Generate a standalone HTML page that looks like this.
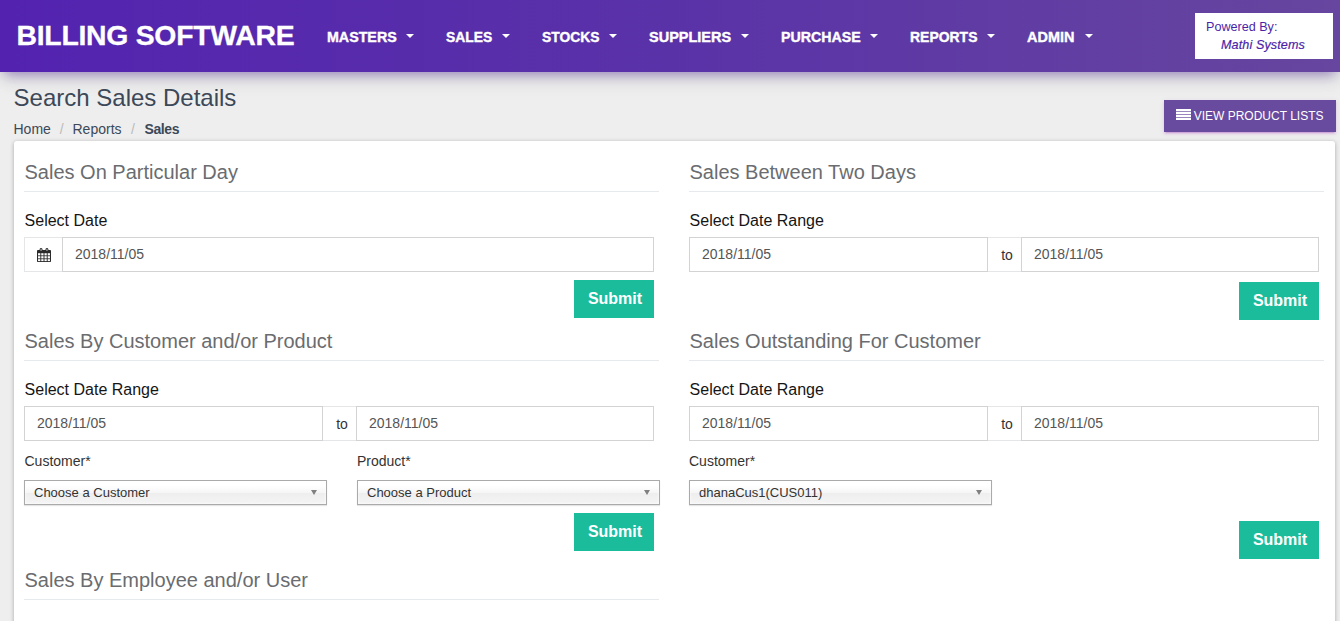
<!DOCTYPE html>
<html lang="en">
<head>
<meta charset="utf-8">
<title>Search Sales Details</title>
<style>
*{box-sizing:border-box;margin:0;padding:0}
html,body{width:1340px;height:621px;overflow:hidden}
body{background:#eeeeee;font-family:"Liberation Sans",Arial,sans-serif;color:#333;position:relative}
.abs{position:absolute;white-space:nowrap}
#nav{position:absolute;left:0;top:0;width:1340px;height:72px;background:linear-gradient(90deg,#5323b0 0%,#5a32a8 50%,#66469f 100%);box-shadow:0 4px 20px 0 rgba(0,0,0,.14),0 7px 12px -5px rgba(94,53,177,.5)}
#brand{left:16.5px;top:19px;font-size:28.4px;line-height:32px;font-weight:bold;color:#fff;-webkit-text-stroke:0.3px #fff;letter-spacing:-.28px}
.mi{top:27px;font-size:15px;line-height:20px;font-weight:bold;color:#fff;transform-origin:0 50%;-webkit-text-stroke:0.4px #fff}
.caret{position:absolute;top:34px;width:0;height:0;border-left:4px solid transparent;border-right:4px solid transparent;border-top:4px solid #fff}
#pow{left:1195px;top:13px;width:138px;height:46px;background:#fff}
#pow .a{left:11px;top:7px;font-size:12.6px;line-height:15px;color:#4b1fa8}
#pow .b{left:26px;top:25px;font-size:12.6px;line-height:15px;color:#4b1fa8;font-style:italic;-webkit-text-stroke:0.2px #4b1fa8;letter-spacing:.1px}
#title{left:13.6px;top:84px;font-size:24px;line-height:28px;color:#3c4858}
.bc{top:121px;font-size:14px;line-height:16px;color:#3c4858}
.bc.sep{color:#bbb}
#vbtn{left:1164px;top:100px;width:172px;height:32px;background:#684a9e;color:#fff;font-size:12px;line-height:32px;box-shadow:0 2px 2px 0 rgba(156,39,176,.14),0 3px 1px -2px rgba(156,39,176,.2),0 1px 5px 0 rgba(156,39,176,.12)}
#panel{left:14px;top:141px;width:1321px;height:500px;background:#fff;border-radius:3px;box-shadow:0 1px 4px rgba(0,0,0,.3)}
.h{font-size:20px;line-height:24px;color:#6a6c6f}
.hr{position:absolute;height:1px;background:#e7eaec;width:635px}
.lb{font-size:16px;line-height:20px;color:#151515}
.lb2{font-size:14px;line-height:18px;color:#333}
.in{position:absolute;height:35px;border:1px solid #d3d3d3;background:#fff;font-size:14px;line-height:33px;color:#555;padding-left:12px}
.ad{position:absolute;height:35px;border:1px solid #e5e6e7;background:#fff;font-size:14px;line-height:35px;color:#333;text-align:center}
.sb{position:absolute;width:80px;height:38px;background:#1abc9c;color:#fff;font-weight:bold;font-size:16px;line-height:38px;text-align:center;padding-left:2px}
.sel{position:absolute;height:25px;width:303px;border:1px solid #aaa;border-radius:0;background:linear-gradient(#fff 20%,#f6f6f6 50%,#eee 52%,#f4f4f4 100%);box-shadow:0 0 3px #fff inset,0 1px 1px rgba(0,0,0,.1);font-size:13px;line-height:23px;color:#333;padding-left:9px}
.sel i{position:absolute;right:8.6px;top:9px;width:0;height:0;border-left:3.8px solid transparent;border-right:3.8px solid transparent;border-top:5.6px solid #808080}
</style>
</head>
<body>
<div id="nav">
  <div id="brand" class="abs">BILLING SOFTWARE</div>
  <div class="abs mi" id="m1" style="left:327px;transform:scaleX(0.950)">MASTERS</div><span class="caret" style="left:406px"></span>
  <div class="abs mi" id="m2" style="left:446px;transform:scaleX(0.923)">SALES</div><span class="caret" style="left:502px"></span>
  <div class="abs mi" id="m3" style="left:542px;transform:scaleX(0.922)">STOCKS</div><span class="caret" style="left:609px"></span>
  <div class="abs mi" id="m4" style="left:649px;transform:scaleX(0.966)">SUPPLIERS</div><span class="caret" style="left:741px"></span>
  <div class="abs mi" id="m5" style="left:781px;transform:scaleX(0.946)">PURCHASE</div><span class="caret" style="left:870px"></span>
  <div class="abs mi" id="m6" style="left:910px;transform:scaleX(0.930)">REPORTS</div><span class="caret" style="left:987px"></span>
  <div class="abs mi" id="m7" style="left:1027px;transform:scaleX(0.964)">ADMIN</div><span class="caret" style="left:1085px"></span>
  <div id="pow" class="abs"><div class="abs a">Powered By:</div><div class="abs b">Mathi Systems</div></div>
</div>

<div id="title" class="abs">Search Sales Details</div>
<div class="abs bc" style="left:13.5px">Home</div>
<div class="abs bc sep" style="left:59.8px">/</div>
<div class="abs bc" style="left:72.5px">Reports</div>
<div class="abs bc sep" style="left:131px">/</div>
<div class="abs bc" style="left:144.4px;font-weight:bold;letter-spacing:-.35px">Sales</div>

<div id="vbtn" class="abs"><svg class="abs" style="left:12px;top:9px" width="15" height="11.2" viewBox="0 0 15 11.2"><g fill="#fff"><rect x="0" y="0" width="15" height="2.3"/><rect x="0" y="2.95" width="15" height="2.3"/><rect x="0" y="5.9" width="15" height="2.3"/><rect x="0" y="8.85" width="15" height="2.3"/></g></svg><span class="abs" style="left:29.7px;top:0">VIEW PRODUCT LISTS</span></div>

<div id="panel" class="abs"></div>

<!-- Section 1 -->
<div class="abs h" style="left:24.5px;top:160px">Sales On Particular Day</div>
<div class="hr" style="left:24px;top:191px"></div>
<div class="abs lb" style="left:24.6px;top:211px">Select Date</div>
<div class="ad" style="left:24px;top:237px;width:39px"><svg style="position:absolute;left:12.2px;top:10px" width="14" height="14" viewBox="0 0 13.5 14" preserveAspectRatio="none"><rect x="0" y="2" width="13.5" height="12" rx=".8" fill="#2b2b2b"/><g fill="#fff"><rect x="1" y="5.2" width="2.2" height="2.2"/><rect x="4.1" y="5.2" width="2.2" height="2.2"/><rect x="7.2" y="5.2" width="2.2" height="2.2"/><rect x="10.3" y="5.2" width="2.2" height="2.2"/><rect x="1" y="8.2" width="2.2" height="2.2"/><rect x="4.1" y="8.2" width="2.2" height="2.2"/><rect x="7.2" y="8.2" width="2.2" height="2.2"/><rect x="10.3" y="8.2" width="2.2" height="2.2"/><rect x="1" y="11.2" width="2.2" height="1.9"/><rect x="4.1" y="11.2" width="2.2" height="1.9"/><rect x="7.2" y="11.2" width="2.2" height="1.9"/><rect x="10.3" y="11.2" width="2.2" height="1.9"/></g><rect x="2.6" y="0" width="2.6" height="4" rx="1.3" fill="#2b2b2b"/><rect x="8.3" y="0" width="2.6" height="4" rx="1.3" fill="#2b2b2b"/><rect x="3.5" y=".8" width=".8" height="2.2" fill="#ddd"/><rect x="9.2" y=".8" width=".8" height="2.2" fill="#ddd"/></svg></div>
<div class="in" style="left:62px;top:237px;width:592px">2018/11/05</div>
<div class="sb" style="left:574px;top:280px">Submit</div>

<!-- Section 2 -->
<div class="abs h" style="left:689.5px;top:160px">Sales Between Two Days</div>
<div class="hr" style="left:689px;top:191px"></div>
<div class="abs lb" style="left:689.6px;top:211px">Select Date Range</div>
<div class="in" style="left:689px;top:237px;width:299px">2018/11/05</div>
<div class="ad" style="left:988px;top:237px;width:33px;border-left:0;border-right:0;padding-left:5px">to</div>
<div class="in" style="left:1021px;top:237px;width:298px">2018/11/05</div>
<div class="sb" style="left:1239px;top:282px">Submit</div>

<!-- Section 3 -->
<div class="abs h" style="left:24.5px;top:329px">Sales By Customer and/or Product</div>
<div class="hr" style="left:24px;top:360px"></div>
<div class="abs lb" style="left:24.6px;top:380px">Select Date Range</div>
<div class="in" style="left:24px;top:406px;width:299px">2018/11/05</div>
<div class="ad" style="left:323px;top:406px;width:33px;border-left:0;border-right:0;padding-left:5px">to</div>
<div class="in" style="left:356px;top:406px;width:298px">2018/11/05</div>
<div class="abs lb2" style="left:24.5px;top:452px">Customer*</div>
<div class="abs lb2" style="left:357px;top:452px">Product*</div>
<div class="sel" style="left:24px;top:480px">Choose a Customer<i></i></div>
<div class="sel" style="left:357px;top:480px">Choose a Product<i></i></div>
<div class="sb" style="left:574px;top:513px">Submit</div>

<!-- Section 4 -->
<div class="abs h" style="left:689.5px;top:329px">Sales Outstanding For Customer</div>
<div class="hr" style="left:689px;top:360px"></div>
<div class="abs lb" style="left:689.6px;top:380px">Select Date Range</div>
<div class="in" style="left:689px;top:406px;width:299px">2018/11/05</div>
<div class="ad" style="left:988px;top:406px;width:33px;border-left:0;border-right:0;padding-left:5px">to</div>
<div class="in" style="left:1021px;top:406px;width:298px">2018/11/05</div>
<div class="abs lb2" style="left:689px;top:452px">Customer*</div>
<div class="sel" style="left:689px;top:480px">dhanaCus1(CUS011)<i></i></div>
<div class="sb" style="left:1239px;top:521px">Submit</div>

<!-- Section 5 -->
<div class="abs h" style="left:24.5px;top:568px">Sales By Employee and/or User</div>
<div class="hr" style="left:24px;top:599px"></div>
</body>
</html>
